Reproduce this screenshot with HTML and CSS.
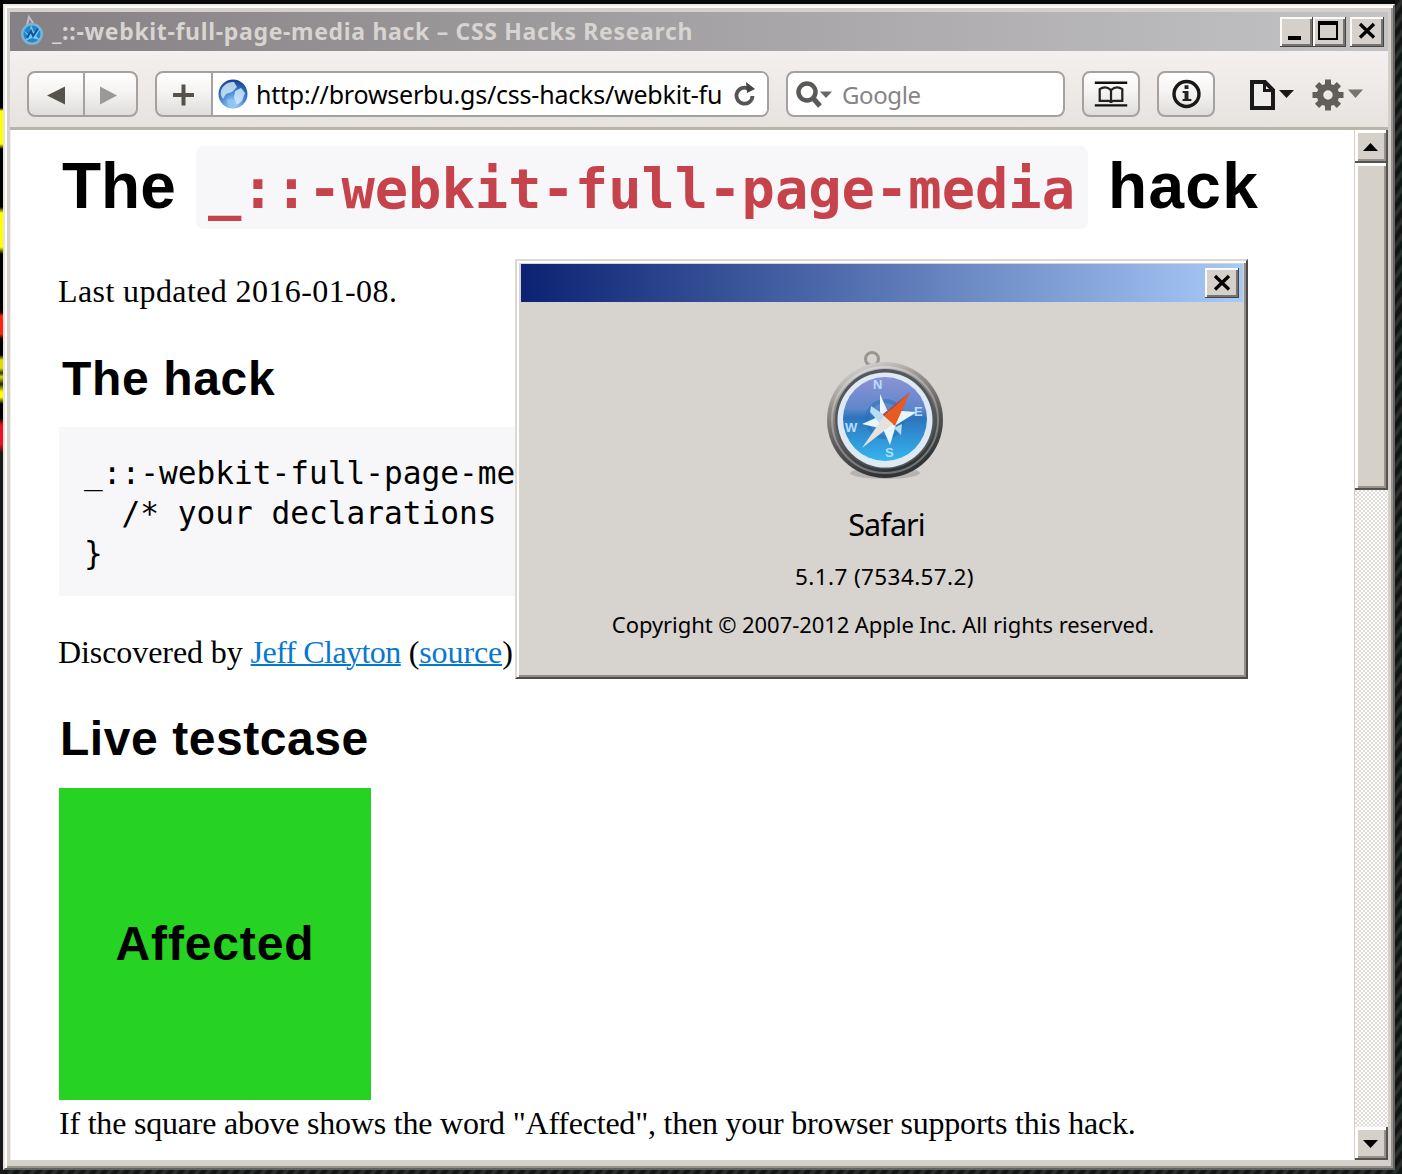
FILE: index.html
```
<!DOCTYPE html>
<html lang="en">
<head>
<meta charset="utf-8">
<title>_::-webkit-full-page-media hack – CSS Hacks Research</title>
<link rel="stylesheet" href="styles.css">
</head>
<body>
<svg class="defs" width="0" height="0">
  <defs>
    <linearGradient id="rim" x1="0" y1="0" x2="0.35" y2="1"><stop offset="0" stop-color="#eee"/><stop offset=".35" stop-color="#96928e"/><stop offset=".7" stop-color="#555453"/><stop offset="1" stop-color="#303638"/></linearGradient>
    <linearGradient id="face" x1="0" y1="0" x2="0" y2="1"><stop offset="0" stop-color="#8b93d4"/><stop offset=".38" stop-color="#5f86cc"/><stop offset=".48" stop-color="#2c74bd"/><stop offset="1" stop-color="#35b5ee"/></linearGradient>
    <radialGradient id="globe" cx=".5" cy=".85" r=".85"><stop offset="0" stop-color="#b4dcfa"/><stop offset=".45" stop-color="#4b8ddb"/><stop offset="1" stop-color="#173f8e"/></radialGradient>
  </defs>
</svg>
<div class="window">
  <header class="titlebar">
    <svg class="app-icon" width="26" height="34" viewBox="0 0 26 34">
      <path d="M8 11 L10 3 L14 9" fill="none" stroke="#b9c3c9" stroke-width="2"/>
      <circle cx="13" cy="20" r="11" fill="#79b4d6"/><circle cx="13" cy="20" r="8.500" fill="#2583c9"/>
      <path d="M4 16 L10 21 L12 11 L15 18 L22 14 L17 22 L21 26 L13 24 L6 27 L9 22Z" fill="#6dd0f4"/>
      <path d="M8 24 L12 17 L14 22 L19 15" stroke="#124f9c" stroke-width="2" fill="none"/>
    </svg>
    <span class="title">_::-webkit-full-page-media hack – CSS Hacks Research</span>
    <div class="controls">
      <button class="ctl"><svg width="32" height="29"><path d="M8 19h13v4H8z"/></svg></button>
      <button class="ctl"><svg width="32" height="29"><path d="M5 4h20v19H5zM7 8v13h16V8z" fill-rule="evenodd"/></svg></button>
      <button class="ctl close"><svg width="33" height="29"><path d="M10 7L24 20.500M24 7L10 20.500" stroke="#000" stroke-width="3.300"/></svg></button>
    </div>
  </header>
  <nav class="toolbar">
    <div class="group history">
      <button class="cell"><svg width="54" height="43"><path d="M18 22.500L36 13.500v18z" fill="#55534b"/></svg></button>
      <button class="cell"><svg width="54" height="43"><path d="M32 22.500L15 13.500v18z" fill="#9b9997"/></svg></button>
    </div>
    <div class="group address">
      <button class="cell plus"><svg width="54" height="43"><path d="M16 22h21M26.500 11.500v21" stroke="#55534b" stroke-width="4"/></svg></button>
      <div class="field">
        <svg class="globe" width="30" height="30" viewBox="0 0 30 30"><circle cx="15" cy="15" r="14.500" fill="url(#globe)"/><path d="M4 9Q9 2 16 3L19 8 14 13 8 15 5 20Q1 15 4 9zM17 12L23 9 27 14 24 22 19 26 16 19z" fill="#d7edfc" opacity=".8"/><path d="M9 21L15 20 17 27 11 27z" fill="#8bc5f7"/></svg>
        <span class="url">http://browserbu.gs/css-hacks/webkit-fu</span>
        <svg class="reload" width="22" height="26" viewBox="0 0 22 26"><path d="M14 7.500A8 8 0 1 0 18.500 15" fill="none" stroke="#555" stroke-width="3.800"/><path d="M12 1l1 11 8-4z" fill="#444"/></svg>
      </div>
    </div>
    <div class="group search">
      <svg width="40" height="30" viewBox="0 0 40 30"><circle cx="11" cy="13" r="8.500" fill="none" stroke="#5b5957" stroke-width="4.500"/><path d="M16 18l8 9" stroke="#5b5957" stroke-width="5"/><path d="M24 12.500h12l-6 6.500z" fill="#666"/></svg>
      <span>Google</span>
    </div>
    <button class="group square"><svg width="55" height="43" viewBox="0 0 56 43"><path d="M11 9.500h33M11 32.500h33" stroke="#111" stroke-width="2.400"/><path d="M27.500 17Q22 12 16 16v12h9q2 0 2.500 2 .5-2 2.500-2h9V16Q33 12 27.500 17v12" fill="none" stroke="#222" stroke-width="2.300"/></svg></button>
    <button class="group square"><svg width="55" height="43" viewBox="0 0 56 43"><circle cx="28" cy="21" r="12.700" fill="none" stroke="#181818" stroke-width="3.500"/><path d="M26 12h4v4h-4zM24 18h6v8h3v2h-9v-2h2v-6h-2z" fill="#222"/></svg></button>
    <svg class="page-menu" width="46" height="34" viewBox="0 0 46 34"><path d="M3 3h13l8 8v18H3z" fill="#eeedeb" stroke="#1a1819" stroke-width="4"/><path d="M15.500 3v8.500H24" fill="none" stroke="#1a1819" stroke-width="3"/><path d="M30 11h15l-7.500 8z" fill="#1a1819"/></svg>
    <svg class="gear-menu" width="52" height="34" viewBox="0 0 52 34"><g transform="translate(16 18)" fill="#625f59"><g><path id="tooth" d="M-3-15.500h6V-7h-6z"/><use href="#tooth" transform="rotate(45)"/><use href="#tooth" transform="rotate(90)"/><use href="#tooth" transform="rotate(135)"/><use href="#tooth" transform="rotate(180)"/><use href="#tooth" transform="rotate(225)"/><use href="#tooth" transform="rotate(270)"/><use href="#tooth" transform="rotate(315)"/></g><circle r="8" fill="none" stroke="#625f59" stroke-width="6.500"/></g><path d="M36 12.500h15l-7.500 8.500z" fill="#77746e"/></svg>
  </nav>
  <div class="viewport">
    <main class="page">
      <h1><span class="word-the">The</span><code>_::-webkit-full-page-media</code><span class="word-hack">hack</span></h1>
      <p class="updated">Last updated 2016-01-08.</p>
      <h2 class="hack-heading">The hack</h2>
      <pre>_::-webkit-full-page-me
  /* your declarations
}</pre>
      <p class="credit">Discovered by <a>Jeff Clayton</a> (<a class="source">source</a>)</p>
      <h2 class="live-heading">Live testcase</h2>
      <div class="testcase">Affected</div>
      <p class="note">If the square above shows the word "Affected", then your browser supports this hack.</p>
    </main>
    <aside class="scrollbar">
      <button class="scroll-btn"><svg width="31" height="29"><path d="M8 19L15.500 11 23 19z"/></svg></button>
      <div class="thumb"></div>
      <button class="scroll-btn down"><svg width="31" height="29"><path d="M8 11L15.500 19 23 11z"/></svg></button>
    </aside>
  </div>
</div>
<section class="dialog">
  <header class="dialog-bar"><button class="ctl"><svg width="32" height="29"><path d="M10 7L24 20.500M24 7L10 20.500" stroke="#000" stroke-width="3.300"/></svg></button></header>
  <svg class="compass" width="120" height="132" viewBox="0 0 120 132">
    <ellipse cx="60" cy="123" rx="35" ry="6" fill="#777" opacity=".35"/>
    <circle cx="47" cy="9" r="6.500" fill="none" stroke="#999590" stroke-width="3"/>
    <circle cx="60" cy="70" r="58" fill="url(#rim)"/>
    <circle cx="60" cy="70" r="53" fill="none" stroke="#fff" stroke-opacity=".3" stroke-width="2"/>
    <circle cx="60" cy="69" r="50" fill="#52575b"/>
    <circle cx="60" cy="70" r="47.500" fill="#dfe9f3"/>
    <circle cx="60" cy="69" r="42" fill="url(#face)"/>
    <circle cx="60" cy="69" r="18" fill="none" stroke="#2470b6" stroke-width="4" opacity=".5"/>
    <path d="M55 44L62 60 92 62 71 75 65 95 58 79 37 74 55 66z" fill="#e9f5ff"/>
    <path d="M46 56L58 64 61 80 45 62zM76 85L69 78 77 74z" fill="#b7ddf5"/>
    <g class="points"><text x="48" y="39">N</text><text x="89" y="66">E</text><text x="60" y="107">S</text><text x="20" y="82">W</text></g>
    <path d="M85 42L70 76 59 67z" fill="#e75b20"/><path d="M85 42L59 67l-1-3z" fill="#b54a3c"/><path d="M59 66l9 8L37 98z" fill="#e5e1dc"/>
  </svg>
  <div class="app-name">Safari</div>
  <div class="version">5.1.7 (7534.57.2)</div>
  <div class="copyright">Copyright © 2007-2012 Apple Inc. All rights reserved.</div>
</section>
</body>
</html>
```
FILE: styles.css
```
* { box-sizing: border-box; }
body {
  margin: 0; width: 1402px; height: 1174px; padding: 4px 0 0 3px; overflow: hidden;
  font-family: "Noto Sans", sans-serif; color: #000;
  background:
    linear-gradient(#000 0 108px, #ff0 111px 144px, #000 149px 207px, #ff0 213px 247px, #000 254px 312px, #f21 316px 334px, #000 339px 355px, #dd0 360px 368px, #330 373px, #dd0 377px, #220 384px, #ff0 392px 397px, #000 404px 418px, #e12 425px 444px, #181818 453px) 0 0 / 3px 100% no-repeat,
    repeating-linear-gradient(125deg, #111615 0 3px, #292f2e 5px 7px, #111615 9px);
}
button { padding: 0; border: 0; font: inherit; display: block; }
svg { display: block; flex: none; }
.defs { position: absolute; }
.window {
  width: 1392px; height: 1166px; background: #d5d0c8; padding: 6px 5px 7px 5px;
  border: 2px solid; border-color: #f0ece5 #65635f #65635f #e6e3dd;
  box-shadow: inset 2px 2px #fff, inset -2px -2px #96928c, 0 -4px #080b0a;
}
.titlebar {
  height: 39px; display: flex; align-items: center; padding: 0 4px 0 9px;
  background: linear-gradient(90deg, #858083, #a4a2a4 50%, #c3c2c4);
}
.app-icon { margin-top: -2px; }
.title { margin-left: 7px; font-size: 23px; font-weight: 700; color: #d7d4d1; letter-spacing: .67px; white-space: pre; line-height: 35px; padding-bottom: 1px; }
.controls { margin-left: auto; display: flex; }
.ctl { width: 33px; height: 30px; background: #d5d1ca; box-shadow: inset -1px -1px #444, inset 2px 2px #fbfaf7, inset -3px -3px #77746f; }
.close { width: 34px; margin-left: 4px; }
.toolbar { height: 79px; display: flex; padding: 20px 0 0 17px; background: linear-gradient(#f3f0ef, #e6e3df); border-bottom: 3px solid #b9b5a8; }
.group { height: 46px; border: 2px solid #a5a1a0; border-radius: 8px; display: flex; background: linear-gradient(#fff, #f4f2f1 50%, #dfdddc); overflow: hidden; flex: none; }
.cell { background: none; }
.history { width: 111px; margin-right: 17px; }
.history .cell { width: 54px; }
.history .cell + .cell { border-left: 2px solid #a5a1a0; }
.address { width: 614px; margin-right: 17px; }
.field { flex: 1; border-left: 2px solid #a5a1a0; background: #fff; display: flex; align-items: center; padding-left: 5px; }
.url { margin-left: 8px; width: 478px; font-size: 25px; letter-spacing: -.21px; white-space: pre; }
.search { width: 279px; margin-right: 17px; background: #fff; align-items: center; padding-left: 8px; }
.search span { margin-left: 6px; font-size: 24px; color: #858585; letter-spacing: -.4px; }
.square { width: 58px; margin-right: 17px; }
.page-menu { margin: 8px 17px 0 17px; }
.gear-menu { margin-top: 6px; }
.viewport { height: 1030px; display: flex; }
.page { width: 1344px; background: #fff; padding: 16px 0 0 48px; border-left: 1px solid #eee; }
h1, h2, p, pre { margin: 0; white-space: pre; }
h1, h2, .testcase { font-family: "Liberation Sans", sans-serif; font-weight: 700; }
h1 { display: flex; height: 83px; font-size: 64px; line-height: 81px; }
.word-the { width: 137px; padding-left: 3px; }
h1 code { width: 892px; height: 83px; padding-left: 12px; border-radius: 8px; background: #f7f7f9; color: #c7434b; font: 700 55.400px/86px "DejaVu Sans Mono", monospace; }
.word-hack { margin-left: 20px; letter-spacing: 1.300px; }
p { font: 32px/40px "Liberation Serif", serif; }
.updated { margin-top: 42px; letter-spacing: .4px; margin-left: -1px; }
h2 { font-size: 48px; line-height: 60px; padding-left: 3px; letter-spacing: .65px; }
.hack-heading { margin-top: 38px; }
pre { width: 600px; height: 169px; margin-top: 18px; padding: 26px 0 0 25px; background: #f7f7f9; font: 31.150px/40px "DejaVu Sans Mono", monospace; }
.credit { margin-top: 36px; margin-left: -1px; letter-spacing: -.08px; }
a { color: #0878cf; text-decoration: underline; text-decoration-thickness: 2px; letter-spacing: -.55px; }
.source { letter-spacing: -.1px; }
.live-heading { margin-top: 37px; padding-left: 1px; letter-spacing: .55px; }
.testcase { width: 312px; height: 312px; margin-top: 19px; background: #26d222; font-size: 48px; line-height: 312px; text-align: center; letter-spacing: .85px; }
.note { margin-top: 3px; letter-spacing: -.215px; }
.scrollbar {
  width: 34px; display: flex; flex-direction: column; border-left: 1px solid #d5d0c8;
  background: repeating-conic-gradient(#fff 0 25%, #dfdcd7 0 50%) 0 0 / 4px 4px;
}
.scroll-btn, .thumb { width: 33px; background: #d5d0c8; box-shadow: inset -2px -2px #55534f, inset 3px 3px #fff, inset -4px -4px #96938d; }
.scroll-btn { height: 33px; flex: none; }
.thumb { height: 327px; }
.down { margin-top: auto; }
.dialog {
  position: absolute; left: 515px; top: 259px; width: 733px; height: 420px; padding: 3px;
  display: flex; flex-direction: column; align-items: center; background: #d7d3cf;
  border: 2px solid; border-color: #dcd9d1 #4d4b49 #4d4b49 #dcd9d1; box-shadow: inset 2px 2px #fff, inset -2px -2px #908d88;
}
.dialog-bar { width: 722px; height: 38px; padding: 4px 4px 0 0; display: flex; justify-content: flex-end; background: linear-gradient(90deg, #0b2272, #a8caf7); }
.dialog-bar .ctl { width: 34px; height: 30px; }
.compass { margin: 48px 0 0 7px; }
.points { font: 700 13px "Liberation Sans", sans-serif; fill: #b9dcff; }
.app-name { margin-top: 21px; font-size: 30.500px; line-height: 42px; letter-spacing: -.9px; margin-left: 10px; }
.version { margin-top: 15px; font-size: 22.500px; line-height: 34px; letter-spacing: .4px; margin-left: 6px; }
.copyright { margin-top: 13px; font-size: 22px; line-height: 34px; white-space: pre; letter-spacing: -.07px; margin-left: 3px; }
```
